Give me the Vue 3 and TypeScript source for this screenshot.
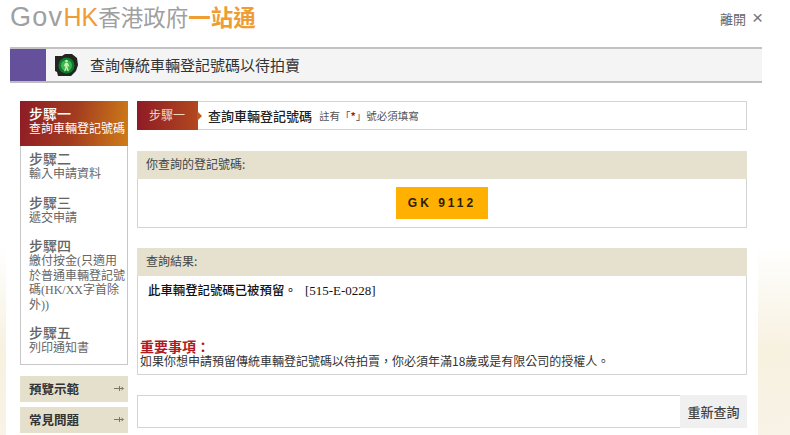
<script setup lang="ts">
interface Step { title: string; desc: string; active?: boolean }
const steps: Step[] = [
  { title: '步驟一', desc: '查詢車輛登記號碼', active: true },
  { title: '步驟二', desc: '輸入申請資料' },
  { title: '步驟三', desc: '遞交申請' },
  { title: '步驟四', desc: '繳付按金(只適用於普通車輛登記號碼(HK/XX字首除外))' },
  { title: '步驟五', desc: '列印通知書' }
]
const links = ['預覽示範', '常見問題']
</script>

<template>
  <div class="page">
    <div class="sheet">
      <header class="top">
        <div class="logo">
          <span class="gov">Gov</span><span class="hk">HK</span><span class="zh">香港政府</span><span class="one">一站通</span>
        </div>
        <div class="leave">離開<span class="x">×</span></div>
      </header>

      <div class="titlebar">
        <div class="swatch"></div>
        <svg class="light" viewBox="0 0 24 24" width="24" height="24" aria-hidden="true">
          <path d="M0 3h7l3-2h7l5 4 1 7-2 6-5 5H3l-1-4-2-1z" fill="#23261f" />
          <circle cx="11.5" cy="12.5" r="8" fill="#0b7a32" />
          <circle cx="11.5" cy="12.5" r="5.5" fill="#3fb44a" />
          <path d="M11.5 6.8a1.3 1.3 0 1 1 0 2.6a1.3 1.3 0 0 1 0-2.6zM10.2 10h2.6l1.5 3.2-.9.4-.8-1.4v2.4l1.3 3.6h-1.2l-1.2-3-1.2 3H9.1l1.2-3.6v-2.4l-.8 1.4-.9-.4z" fill="#c9f0b8" />
        </svg>
        <h1>查詢傳統車輛登記號碼以待拍賣</h1>
      </div>

      <div class="body">
        <aside class="side">
          <ol class="steps">
            <li v-for="s in steps" :key="s.title" :class="['step', { active: s.active }]">
              <div class="st">{{ s.title }}</div>
              <div class="sd">{{ s.desc }}</div>
            </li>
          </ol>
          <a v-for="l in links" :key="l" class="link">
            <span>{{ l }}</span>
            <svg width="10" height="9" viewBox="0 0 10 9" aria-hidden="true">
              <path d="M0 4.5h9M5.5 2v5M7.5 3l2 1.5-2 1.5" fill="none" stroke="#7c785e" stroke-width="1" />
            </svg>
          </a>
        </aside>

        <main class="main">
          <div class="crumb">
            <div class="tag">步驟一</div>
            <b>查詢車輛登記號碼</b>
            <small>註有「<em>*</em>」號必須填寫</small>
          </div>

          <section class="panel first">
            <div class="phead">你查詢的登記號碼:</div>
            <div class="plate-wrap"><div class="plate">GK 9112</div></div>
          </section>

          <section class="panel second">
            <div class="phead">查詢結果:</div>
            <p class="result"><b>此車輛登記號碼已被預留。</b> [515-E-0228]</p>
            <div class="notice">
              <div class="red">重要事項：</div>
              <div class="ntext">如果你想申請預留傳統車輛登記號碼以待拍賣，你必須年滿18歲或是有限公司的授權人。</div>
            </div>
          </section>

          <div class="actions"><button type="button">重新查詢</button></div>
        </main>
      </div>
    </div>
  </div>
</template>

<style scoped>
.page {
  width: 790px;
  height: 435px;
  overflow: hidden;
  background: linear-gradient(#ffffff 0, #ffffff 245px, #f7f1e0 350px, #f8f3e6 435px);
  font-family: "Liberation Serif", "Noto Sans CJK TC", serif;
  color: #222;
}
.sheet {
  width: 752px;
  height: 435px;
  margin-left: 6px;
  padding-left: 4px;
  background: #fff;
  box-sizing: border-box;
}
.top {
  height: 47px;
  display: flex;
  justify-content: space-between;
  width: 753px;
  box-sizing: border-box;
}
.logo {
  display: flex;
  align-items: baseline;
  height: 34px;
  margin-top: -1px;
  line-height: 34px;
  font-size: 22.5px;
  font-family: "Noto Sans CJK TC", sans-serif;
}
.gov, .hk {
  font-family: "Liberation Sans", sans-serif;
  font-size: 27px;
}
.gov { color: #a0a0a0; letter-spacing: 1.3px; }
.hk { color: #ee9d33; font-size: 25px; margin-right: 0; }
.zh { color: #a0a0a0; }
.one { color: #ee9d33; font-weight: 700; }
.leave {
  display: flex;
  align-items: center;
  height: 16px;
  font-size: 13px;
  color: #666;
  margin-top: 10px;
  font-family: "Noto Sans CJK TC", sans-serif;
}
.x {
  font-family: "Liberation Sans", sans-serif;
  font-size: 19px;
  margin-left: 6px;
  font-weight: 400;
  color: #777;
}
.titlebar {
  width: 752px;
  height: 36px;
  box-sizing: border-box;
  display: flex;
  align-items: center;
  background: #f4f4f4;
  border-top: 2px solid #c2c2c2;
  border-bottom: 2px solid #bdbdbd;
}
.swatch {
  width: 36px;
  height: 32px;
  background: #65519b;
}
.light { margin-left: 9px; }
.titlebar h1 {
  margin: 0 0 0 11px;
  font-size: 15px;
  font-weight: 400;
  color: #333;
  font-family: "Noto Sans CJK TC", sans-serif;
  line-height: 20px;
}
.body {
  display: flex;
  align-items: flex-start;
  padding: 18px 0 0 10px;
  gap: 9px;
}
.side { width: 108px; flex: none; }
.steps {
  list-style: none;
  margin: 0 0 11px;
  padding: 0;
  border: 1px solid #c8c8c8;
  border-top: 0;
  height: 264px;
  box-sizing: border-box;
}
.step {
  padding: 0 0 14px 8px;
  font-family: "Liberation Serif", "Noto Sans CJK TC", serif;
  color: #666;
}
.step.active {
  margin: 0 -1px 6px;
  height: 45px;
  padding: 6px 0 0 9px;
  box-sizing: border-box;
  color: #fff;
  background: linear-gradient(100deg, #8e1b26 0%, #a33c20 50%, #cf7d18 100%);
}
.st { font-size: 14px; line-height: 15px; font-weight: 500; }
.sd { font-size: 12px; line-height: 14.5px; width: 97px; }
.step.active .sd { white-space: nowrap; }
.link {
  display: flex;
  align-items: center;
  justify-content: space-between;
  height: 26px;
  margin-bottom: 5px;
  padding: 0 4px 1px 9px;
  box-sizing: border-box;
  background: #e5e0cc;
  font-size: 12.5px;
  font-weight: 700;
  color: #333;
  font-family: "Noto Sans CJK TC", sans-serif;
}
.main { width: 610px; flex: none; }
.crumb {
  height: 29px;
  box-sizing: border-box;
  display: flex;
  align-items: center;
  border: 1px solid #d4d4d4;
  border-left: 0;
  background: #fff;
  font-family: "Noto Sans CJK TC", sans-serif;
}
.tag {
  position: relative;
  width: 61px;
  height: 29px;
  margin-top: -1px;
  margin-bottom: -1px;
  box-sizing: border-box;
  padding-left: 12px;
  line-height: 28px;
  font-size: 12px;
  color: #f0d8c0;
  background: linear-gradient(90deg, #8e1b26, #b2481f);
}
.tag::after {
  content: "";
  position: absolute;
  left: 60px;
  top: 10px;
  border-left: 5px solid #bb5a1e;
  border-top: 5px solid transparent;
  border-bottom: 5px solid transparent;
}
.crumb b { margin-left: 10px; font-size: 13px; font-weight: 500; color: #222; }
.crumb small { margin-left: 7px; font-size: 10.5px; color: #555; }
.crumb em { font-style: normal; font-weight: 700; color: #a01c20; }
.panel {
  box-sizing: border-box;
  border: 1px solid #d4d4d4;
  border-top: 0;
  background: #fff;
  font-family: "Noto Sans CJK TC", sans-serif;
}
.first { height: 77px; margin-top: 21px; }
.second { height: 127px; margin-top: 20px; display: flex; flex-direction: column; }
.phead {
  height: 28px;
  margin: 0 -1px;
  padding-left: 9px;
  line-height: 26px;
  font-size: 12px;
  color: #444;
  background: #e6e1cf;
}
.plate-wrap { display: flex; justify-content: center; padding: 8px 0 0 0; }
.plate {
  width: 92px;
  height: 32px;
  line-height: 33px;
  text-align: center;
  background: #ffb000;
  color: #2a2008;
  font-family: "Liberation Sans", sans-serif;
  font-size: 12px;
  font-weight: 700;
  letter-spacing: 3px;
  white-space: pre;
}
.result {
  margin: 5px 0 0 10px;
  font-size: 13px;
  line-height: 18px;
  color: #111;
  font-family: "Liberation Serif", "Noto Sans CJK TC", serif;
}
.result b { font-size: 12.4px; font-weight: 500; font-family: "Noto Sans CJK TC", sans-serif; margin-right: 5px; }
.notice { margin-top: auto; padding: 0 0 5px 2px; }
.red { font-size: 14px; line-height: 14px; font-weight: 700; color: #b01a22; }
.ntext { font-size: 12px; line-height: 16px; color: #333; }
.actions {
  height: 33px;
  margin-top: 20px;
  box-sizing: border-box;
  border: 1px solid #d4d4d4;
  display: flex;
  justify-content: flex-end;
}
.actions button {
  width: 67px;
  margin: -1px -1px -1px 0;
  padding: 0;
  border: 0;
  background: #f0f0f0;
  font-family: "Noto Sans CJK TC", sans-serif;
  font-size: 13px;
  font-weight: 500;
  color: #444;
}
</style>
